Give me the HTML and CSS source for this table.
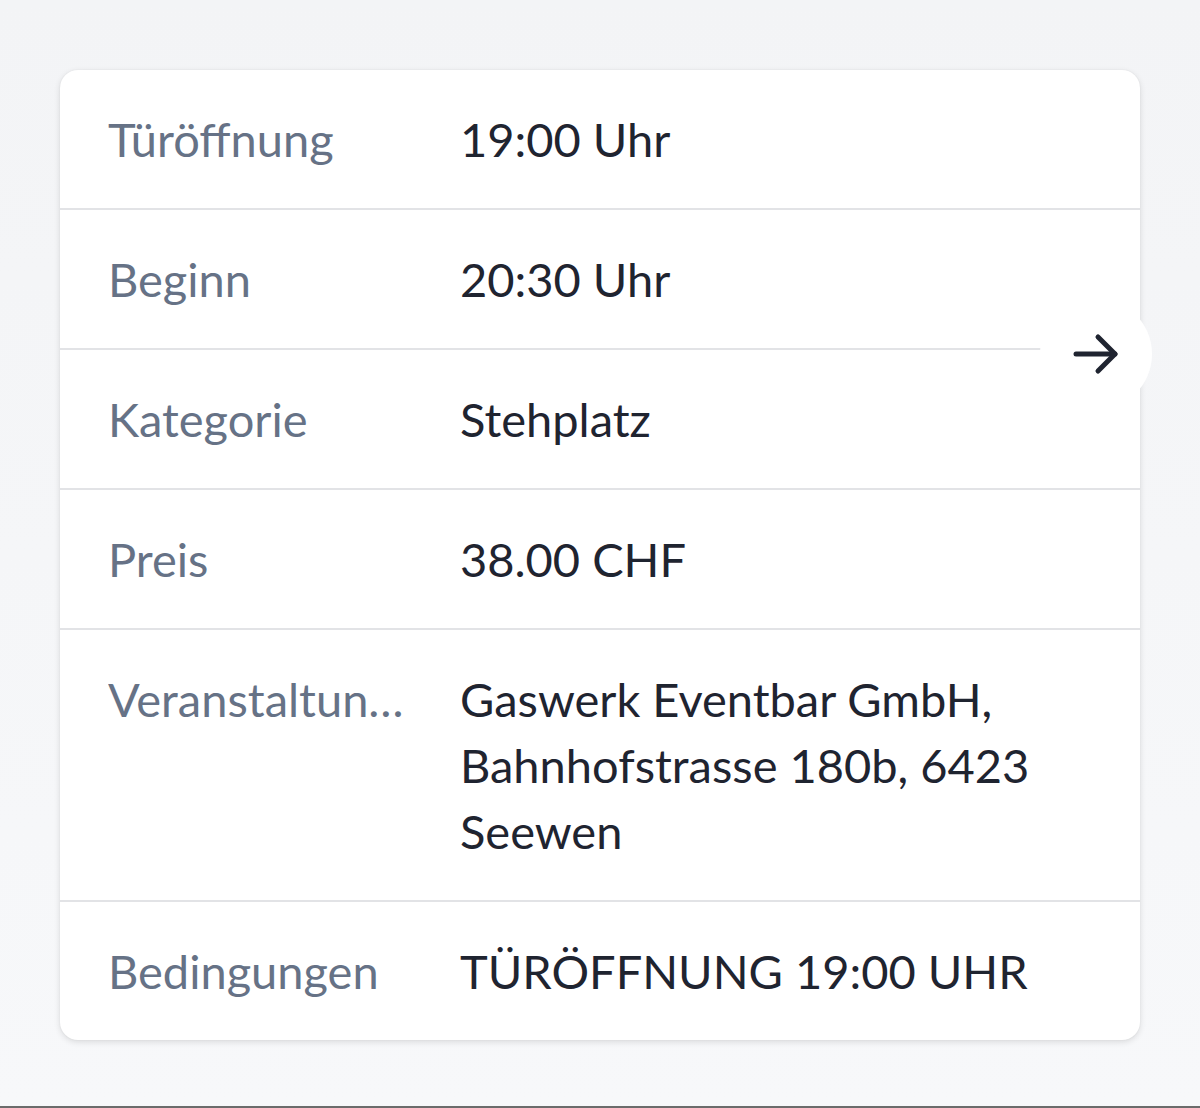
FILE: index.html
```html
<!DOCTYPE html>
<html lang="de">
<head>
    <meta charset="UTF-8">
    <title>Ticket Details</title>
    <link rel="stylesheet" href="styles.css">
</head>
<body>
    <div class="page">
        <div class="card">
            <div class="row">
                <div class="label">Türöffnung</div>
                <div class="value">19:00 Uhr</div>
            </div>
            <div class="row">
                <div class="label">Beginn</div>
                <div class="value">20:30 Uhr</div>
            </div>
            <div class="row">
                <div class="label">Kategorie</div>
                <div class="value">Stehplatz</div>
            </div>
            <div class="row">
                <div class="label">Preis</div>
                <div class="value">38.00 CHF</div>
            </div>
            <div class="row">
                <div class="label"><span class="clip">Veranstaltungsort</span></div>
                <div class="value">Gaswerk Eventbar GmbH,<br>Bahnhofstrasse 180b, 6423<br>Seewen</div>
            </div>
            <div class="row">
                <div class="label">Bedingungen</div>
                <div class="value">TÜRÖFFNUNG 19:00 UHR</div>
            </div>

            <button class="next-button" aria-label="Weiter">
                <svg width="46" height="42" viewBox="0 0 46 42" fill="none" stroke="#1f2430" stroke-width="5" stroke-linecap="round" stroke-linejoin="round">
                    <path d="M3 21 H42"/>
                    <path d="M25 4 L42 21 L25 38"/>
                </svg>
            </button>
        </div>
    </div>
    <div class="bottom-line"></div>
</body>
</html>
```

FILE: styles.css
```css
html, body {
    margin: 0;
    height: 100%;
}

body {
    font-family: Lato, "Open Sans", "Liberation Sans", sans-serif;
    background: linear-gradient(#f3f4f6, #f7f8fa);
    display: flex;
    flex-direction: column;
}

.page {
    flex: 1;
    padding: 70px 60px 0 60px;
}

.card {
    position: relative;
    background-color: #fff;
    border-radius: 18px;
    box-shadow: 0 2px 6px rgba(0, 0, 0, 0.12), 0 0 2px rgba(0, 0, 0, 0.06);
}

.row {
    display: grid;
    grid-template-columns: 320px 1fr;
    column-gap: 32px;
    padding: 36px 48px;
    line-height: 66px;
    font-size: 47px;
    border-bottom: 2px solid #e2e3e6;
}

.row:last-of-type {
    border-bottom: none;
}

.label {
    color: #667286;
    white-space: nowrap;
    overflow: hidden;
    text-overflow: ellipsis;
}

.label .clip {
    display: inline-block;
    max-width: 306px;
    overflow: hidden;
    text-overflow: ellipsis;
    vertical-align: top;
}

.value {
    color: #1f2430;
}

.next-button {
    position: absolute;
    top: 228px;
    right: -12px;
    width: 112px;
    height: 112px;
    border-radius: 50%;
    border: none;
    background-color: #fff;
    display: flex;
    align-items: center;
    justify-content: center;
    padding: 0;
    cursor: pointer;
}

.bottom-line {
    height: 2px;
    background-color: #6b6b6b;
}
```
